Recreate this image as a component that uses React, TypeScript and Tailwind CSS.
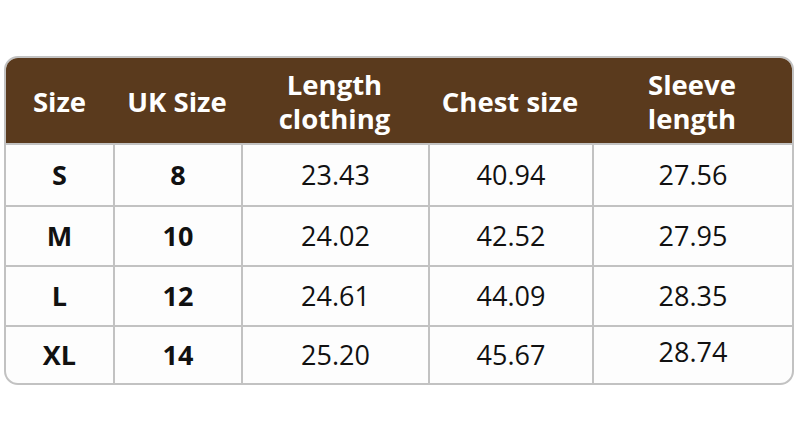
import React from "react";

const headers = ["Size", "UK Size", "Length\nclothing", "Chest size", "Sleeve\nlength"];
const rows = [
  ["S", "8", "23.43", "40.94", "27.56"],
  ["M", "10", "24.02", "42.52", "27.95"],
  ["L", "12", "24.61", "44.09", "28.35"],
  ["XL", "14", "25.20", "45.67", "28.74"],
];
const rowH = ["h-[62px]", "h-[60px]", "h-[60px]", "h-[58px]"];

export default function App() {
  return (
    <div
      className="w-[800px] h-[431px] bg-white pt-[56px] pl-[4px]"
      style={{ fontFamily: '"Open Sans", "Noto Sans", sans-serif' }}
    >
      <div className="w-[790px] border-2 border-[#c2c2c2] rounded-[14px] overflow-hidden bg-[#fdfdfd]">
        <div className="grid grid-cols-[107px_128px_187px_164px_200px] h-[85px] bg-[#5a3a1d] text-white font-bold text-[27.5px] leading-[34px]">
          {headers.map((h, i) => (
            <div key={i} className="flex items-center justify-center text-center whitespace-pre-line pt-[2px]">
              {h}
            </div>
          ))}
        </div>
        {rows.map((r, ri) => (
          <div
            key={ri}
            className={`grid grid-cols-[107px_128px_187px_164px_200px] border-t-2 border-[#c2c2c2] ${rowH[ri]} text-[27px] text-[#111]`}
          >
            {r.map((c, ci) => (
              <div
                key={ci}
                className={`flex items-center justify-center ${ci > 0 ? "border-l-2 border-[#c2c2c2]" : ""} ${ci < 2 ? "font-bold" : ""}`}
              >
                <span className={ri === 3 && ci === 4 ? "-mt-[6px]" : ""}>{c}</span>
              </div>
            ))}
          </div>
        ))}
      </div>
    </div>
  );
}
